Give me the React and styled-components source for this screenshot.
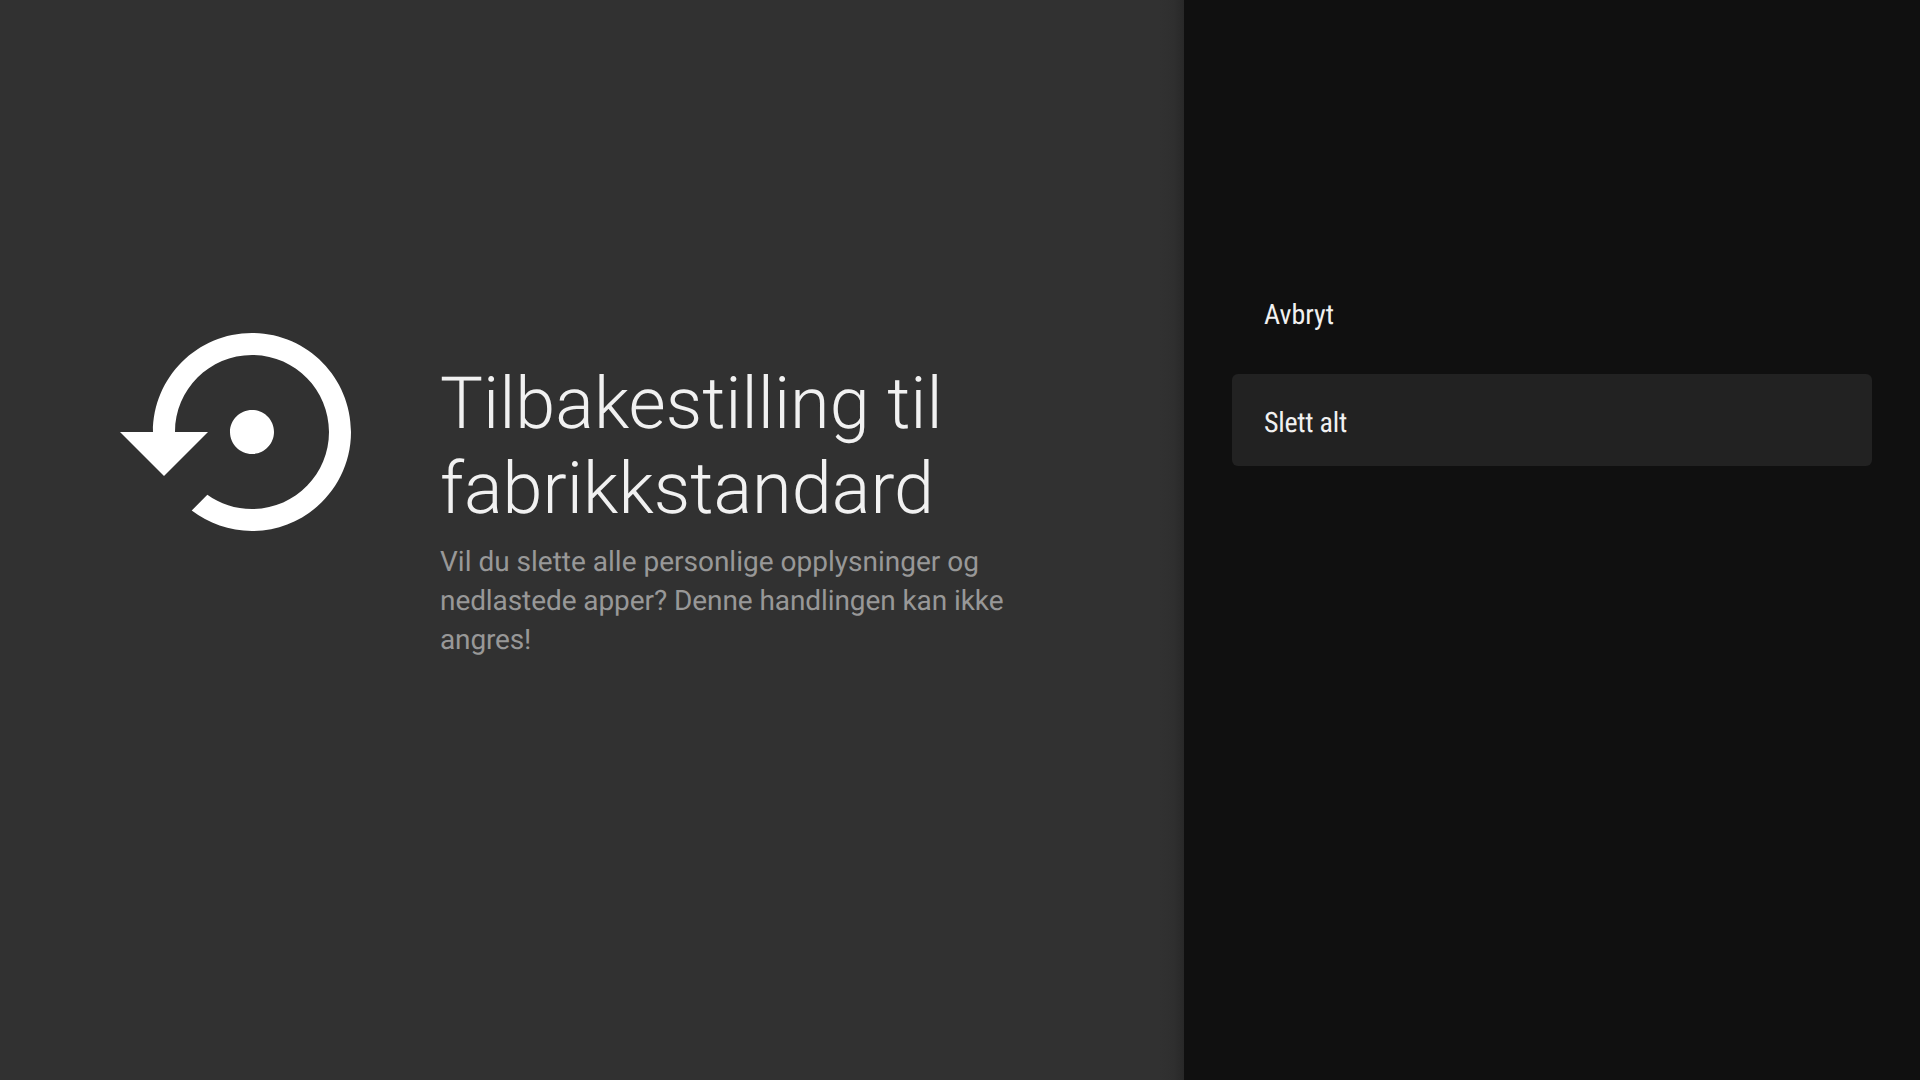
import React from "react";
import styled, { createGlobalStyle } from "styled-components";

const GlobalStyle = createGlobalStyle`
  * { box-sizing: border-box; }
  body { margin: 0; background: #313131; }
`;

const Screen = styled.main`
  display: flex;
  width: 1920px;
  height: 1080px;
  overflow: hidden;
  font-family: Roboto, "Liberation Sans", sans-serif;
  text-rendering: geometricPrecision;
`;

const Guidance = styled.section`
  display: flex;
  align-items: flex-start;
  flex: 1;
  padding: 300px 0 0 120px;
  background: linear-gradient(to right, #313131 calc(100% - 24px), #2f2f2f calc(100% - 10px), #282828 100%);
`;

const RestoreIcon = styled.svg`
  width: 264px;
  height: 264px;
  flex: none;
  fill: #ffffff;
`;

const Copy = styled.div`
  width: 590px;
  margin: 61px 0 0 56px;
`;

const Title = styled.h1`
  margin: 0;
  color: #f1f1f1;
  font-size: 72px;
  font-weight: 300;
  line-height: 85px;
  white-space: nowrap;
`;

const Description = styled.p`
  margin: 11px 0 0;
  color: #989898;
  font-size: 28px;
  line-height: 39.2px;
  white-space: nowrap;
`;

const Line = styled.span`
  display: block;
  letter-spacing: ${({ $tracking = 0 }) => $tracking}px;
`;

const Actions = styled.nav`
  display: flex;
  flex-direction: column;
  gap: 16px;
  width: 736px;
  padding: 266px 48px 0;
  background: #101010;
`;

const Action = styled.button`
  display: flex;
  align-items: center;
  height: 92px;
  padding: 4px 32px 0;
  border: 0;
  border-radius: 6px;
  background: ${({ $focused }) => ($focused ? "#222222" : "transparent")};
  color: #f1f1f1;
  font-family: "Roboto Condensed", Roboto, sans-serif;
  font-stretch: 75%;
  font-size: 28px;
  line-height: 33px;
  text-align: left;
  text-rendering: inherit;
`;

export default function App() {
  return (
    <>
      <GlobalStyle />
      <Screen>
        <Guidance>
          <RestoreIcon viewBox="0 0 24 24" aria-hidden="true">
            <path d="M14 12c0-1.1-.9-2-2-2s-2 .9-2 2 .9 2 2 2 2-.9 2-2zm-2-9c-4.97 0-9 4.03-9 9H0l4 4 4-4H5c0-3.87 3.13-7 7-7s7 3.13 7 7-3.13 7-7 7c-1.51 0-2.91-.49-4.06-1.3l-1.42 1.44C8.04 20.3 9.94 21 12 21c4.97 0 9-4.03 9-9s-4.03-9-9-9z" />
          </RestoreIcon>
          <Copy>
            <Title>
              <Line>Tilbakestilling til</Line>
              <Line $tracking={0.04}>fabrikkstandard</Line>
            </Title>
            <Description>
              <Line>Vil du slette alle personlige opplysninger og</Line>
              <Line $tracking={-0.08}>nedlastede apper? Denne handlingen kan ikke</Line>
              <Line $tracking={-0.15}>angres!</Line>
            </Description>
          </Copy>
        </Guidance>
        <Actions>
          <Action>
            <Line>Avbryt</Line>
          </Action>
          <Action $focused>
            <Line $tracking={-0.25}>Slett alt</Line>
          </Action>
        </Actions>
      </Screen>
    </>
  );
}
